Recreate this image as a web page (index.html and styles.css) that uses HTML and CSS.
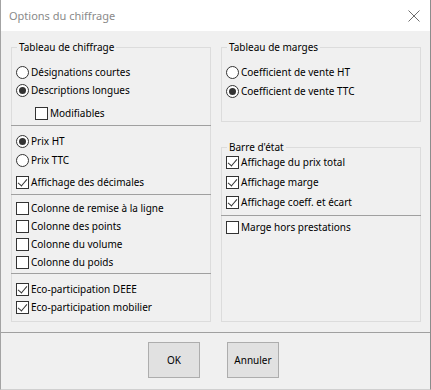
FILE: index.html
```html
<!DOCTYPE html>
<html lang="fr">
<head>
  <meta charset="UTF-8">
  <title>Options du chiffrage</title>
  <link rel="stylesheet" href="styles.css">
</head>
<body>

  <div class="dialog">
    <div class="titlebar">
      <span class="title">Options du chiffrage</span>
      <svg class="close" width="12" height="12" viewBox="0 0 12 12">
        <path d="M0.5 0.5 L11.5 11.5 M11.5 0.5 L0.5 11.5" stroke="#6d6d6d" stroke-width="1" fill="none"/>
      </svg>
    </div>

    <div class="content">
      <div class="column">
        <div class="group group-tall">
          <span class="legend">Tableau de chiffrage</span>

          <div class="section s1">
            <div class="row"><span class="radio"></span>Désignations courtes</div>
            <div class="row"><span class="radio on"></span>Descriptions longues</div>
            <div class="row indent"><span class="check"></span>Modifiables</div>
          </div>
          <div class="sep"></div>

          <div class="section s2">
            <div class="row"><span class="radio on"></span>Prix HT</div>
            <div class="row gap1"><span class="radio"></span>Prix TTC</div>
            <div class="row gap4"><span class="check on"></span>Affichage des décimales</div>
          </div>
          <div class="sep"></div>

          <div class="section s3">
            <div class="row"><span class="check"></span>Colonne de remise à la ligne</div>
            <div class="row"><span class="check"></span>Colonne des points</div>
            <div class="row"><span class="check"></span>Colonne du volume</div>
            <div class="row"><span class="check"></span>Colonne du poids</div>
          </div>
          <div class="sep"></div>

          <div class="section s4">
            <div class="row"><span class="check on"></span>Eco-participation DEEE</div>
            <div class="row"><span class="check on"></span>Eco-participation mobilier</div>
          </div>
        </div>
      </div>

      <div class="column">
        <div class="group marges">
          <span class="legend">Tableau de marges</span>
          <div class="row"><span class="radio"></span>Coefficient de vente HT</div>
          <div class="row gap1"><span class="radio on"></span>Coefficient de vente TTC</div>
        </div>

        <div class="group etat">
          <span class="legend">Barre d'état</span>
          <div class="section s5">
            <div class="row r20"><span class="check on"></span>Affichage du prix total</div>
            <div class="row r20"><span class="check on"></span>Affichage marge</div>
            <div class="row r20"><span class="check on"></span>Affichage coeff. et écart</div>
          </div>
          <div class="sep"></div>
          <div class="section s6">
            <div class="row"><span class="check"></span>Marge hors prestations</div>
          </div>
        </div>
      </div>
    </div>

    <div class="footer">
      <button class="btn">OK</button>
      <button class="btn">Annuler</button>
    </div>
  </div>

</body>
</html>
```

FILE: styles.css
```css
html, body {
  margin: 0;
  padding: 0;
}
body {
  font-family: "Noto Sans", "Open Sans", sans-serif;
  font-size: 10px;
  color: #000;
  background: #f0f0f0;
}
.dialog {
  width: 429px;
  height: 389px;
  border-left: 1px solid #a3a3a3;
  border-right: 1px solid #8c8c8c;
  border-bottom: 1px solid #d0d0d0;
  background: #f0f0f0;
  display: flex;
  flex-direction: column;
}
.titlebar {
  height: 31px;
  flex: none;
  background: #fff;
  display: flex;
  align-items: center;
  justify-content: space-between;
  padding: 0 10px 0 8px;
}
.title {
  color: #8a8a8a;
  font-size: 11px;
}
.close {
  display: block;
}
.content {
  display: flex;
  gap: 10px;
  padding: 16px 9px 10px 10px;
}
.column {
  width: 200px;
  display: flex;
  flex-direction: column;
}
.group {
  position: relative;
  border: 1px solid #dcdcdc;
  box-sizing: border-box;
}
/* caption sits on top of the box border */
.legend {
  position: absolute;
  left: 5px;
  top: -8px;
  padding: 0 2px;
  line-height: 14px;
  background: #f0f0f0;
}
.group-tall {
  flex: 1;
}
.section {
  padding-left: 4px;
}
.s1 { padding-top: 15px; padding-bottom: 3px; }
.s2 { padding-top: 6px; padding-bottom: 3px; }
.s3 { padding-top: 4px; padding-bottom: 2px; }
.s4 { padding-top: 6px; padding-bottom: 5px; }
.s5 { padding-top: 4px; padding-bottom: 3px; }
.s6 { padding-top: 2px; }

.marges {
  height: 75px;
  flex: none;
  padding: 15px 0 0 4px;
}
.etat {
  margin-top: 25px;
  flex: 1;
}
.sep {
  border-top: 1px solid #a0a0a0;
  margin: 0 -1px;
}
.row {
  display: flex;
  align-items: center;
  height: 18px;
  white-space: nowrap;
}
.row.r20 { height: 20px; }
.row.gap1 { margin-top: 1px; }
.row.gap4 { margin-top: 4px; }
.s1 .indent { margin-top: 5px; padding-left: 19px; }

.radio,
.check {
  width: 11px;
  height: 11px;
  border: 1px solid #333;
  background: #fff;
  margin-right: 2px;
  flex: none;
  position: relative;
}
.radio {
  border-radius: 50%;
}
.radio.on::after {
  content: "";
  position: absolute;
  left: 2px;
  top: 2px;
  width: 7px;
  height: 7px;
  border-radius: 50%;
  background: #333;
}
.check.on::after {
  content: "";
  position: absolute;
  left: 3px;
  top: 0px;
  width: 4px;
  height: 8px;
  border-right: 1px solid #333;
  border-bottom: 1px solid #333;
  transform: rotate(40deg);
}
.footer {
  flex: 1;
  border-top: 1px solid #a0a0a0;
  display: flex;
  justify-content: center;
  align-items: flex-start;
  gap: 27px;
  padding: 9px 4px 0 0;
}
.btn {
  width: 52px;
  height: 36px;
  background: #e1e1e1;
  border: 1px solid #adadad;
  font-family: inherit;
  font-size: 10px;
  color: #000;
  padding: 0;
}
```
